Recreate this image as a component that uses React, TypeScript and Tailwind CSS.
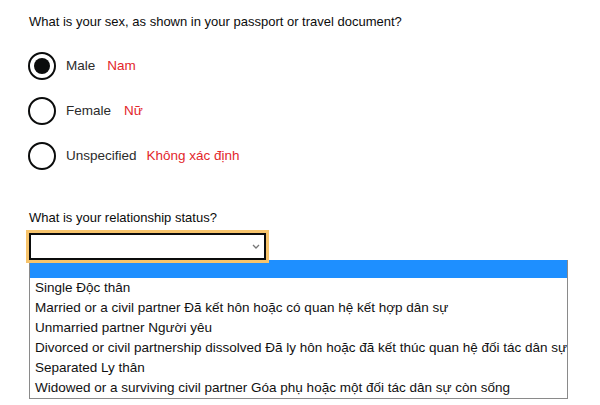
import { useState } from 'react'

const sexOptions = [
  { value: 'male', label: 'Male', vi: 'Nam', gap: 'ml-[12px]' },
  { value: 'female', label: 'Female', vi: 'Nữ', gap: 'ml-[13px]' },
  { value: 'unspecified', label: 'Unspecified', vi: 'Không xác định', gap: 'ml-[10px]' },
]

const statusOptions = [
  'Single Độc thân',
  'Married or a civil partner Đã kết hôn hoặc có quan hệ kết hợp dân sự',
  'Unmarried partner Người yêu',
  'Divorced or civil partnership dissolved Đã ly hôn hoặc đã kết thúc quan hệ đối tác dân sự',
  'Separated Ly thân',
  'Widowed or a surviving civil partner Góa phụ hoặc một đối tác dân sự còn sống',
]

export default function App() {
  const [sex, setSex] = useState('male')

  return (
    <div className="w-[600px] h-[405px] bg-white text-[#0b0c0c] font-['Liberation_Sans',Arial,sans-serif] text-[13px] pl-[29px] pt-[14px] overflow-hidden">
      <p className="leading-[16px]">What is your sex, as shown in your passport or travel document?</p>

      {/* Radios */}
      <div className="mt-[22px] flex flex-col gap-[17px] -ml-[1px]">
        {sexOptions.map(o => (
          <label key={o.value} className="flex items-center h-[28px] cursor-pointer text-[13.5px]" onClick={() => setSex(o.value)}>
            <span className="w-[28px] h-[28px] rounded-full border-2 border-[#0b0c0c] flex items-center justify-center shrink-0">
              {sex === o.value && <span className="w-[16px] h-[16px] rounded-full bg-[#0b0c0c]" />}
            </span>
            <span className="ml-[10px] text-[#2b2b2b]">{o.label}</span>
            <span className={`${o.gap} text-[#e3262b]`}>{o.vi}</span>
          </label>
        ))}
      </div>

      {/* Relationship status */}
      <p className="mt-[40px] leading-[16px]">What is your relationship status?</p>
      <div className="mt-[7px] w-[237px] h-[27px] border-2 border-[#0b0c0c] outline-[3px] outline-solid outline-[#f7c46c] flex items-center justify-end pr-[4px]">
        <svg width="8" height="5" viewBox="0 0 8 5" fill="none" stroke="#777" strokeWidth="1.3">
          <path d="M1 1l3 3 3-3" />
        </svg>
      </div>

      <div className="w-[539px] border border-t-0 border-[#8a8a8a] bg-white text-[13.5px]">
        <div className="h-[18px] bg-[#1e8fff]" />
        {statusOptions.map(s => (
          <div key={s} className="h-[20px] leading-[20px] px-[5px] whitespace-nowrap text-[#111]">{s}</div>
        ))}
      </div>
    </div>
  )
}
